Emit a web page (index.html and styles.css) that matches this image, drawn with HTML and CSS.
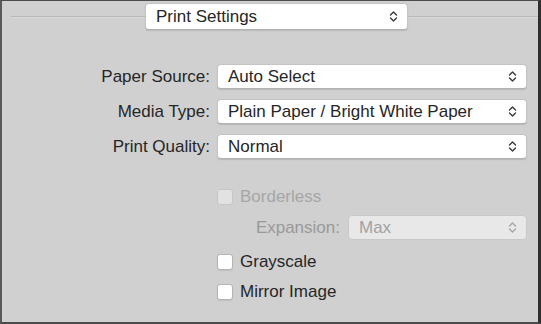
FILE: index.html
```html
<!DOCTYPE html>
<html lang="en">
<head>
  <meta charset="UTF-8" />
  <meta name="viewport" content="width=device-width, initial-scale=1.0" />
  <title>Print Settings</title>
  <link rel="stylesheet" href="styles.css">
</head>
<body>
  <div class="window">
    <div class="header">
      <div class="rule rule-left"></div>
      <div class="popup popup-header">
        <span>Print Settings</span>
        <svg class="arrows" width="9" height="13" viewBox="0 0 9 13"><path d="M1.5 5 L4.5 2 L7.5 5 M1.5 8 L4.5 11 L7.5 8" fill="none" stroke="#3a3a3a" stroke-width="1.4" stroke-linecap="round" stroke-linejoin="round"/></svg>
      </div>
      <div class="rule rule-right"></div>
    </div>

    <div class="form">
      <label class="label">Paper Source:</label>
      <div class="popup">
        <span>Auto Select</span>
        <svg class="arrows" width="9" height="13" viewBox="0 0 9 13"><path d="M1.5 5 L4.5 2 L7.5 5 M1.5 8 L4.5 11 L7.5 8" fill="none" stroke="#3a3a3a" stroke-width="1.4" stroke-linecap="round" stroke-linejoin="round"/></svg>
      </div>
      <label class="label">Media Type:</label>
      <div class="popup">
        <span>Plain Paper / Bright White Paper</span>
        <svg class="arrows" width="9" height="13" viewBox="0 0 9 13"><path d="M1.5 5 L4.5 2 L7.5 5 M1.5 8 L4.5 11 L7.5 8" fill="none" stroke="#3a3a3a" stroke-width="1.4" stroke-linecap="round" stroke-linejoin="round"/></svg>
      </div>
      <label class="label">Print Quality:</label>
      <div class="popup">
        <span>Normal</span>
        <svg class="arrows" width="9" height="13" viewBox="0 0 9 13"><path d="M1.5 5 L4.5 2 L7.5 5 M1.5 8 L4.5 11 L7.5 8" fill="none" stroke="#3a3a3a" stroke-width="1.4" stroke-linecap="round" stroke-linejoin="round"/></svg>
      </div>
    </div>

    <div class="options">
      <div class="check-row row-borderless disabled">
        <span class="box"></span>
        <span>Borderless</span>
      </div>
      <div class="expansion disabled">
        <label class="label">Expansion:</label>
        <div class="popup">
          <span>Max</span>
          <svg class="arrows" width="9" height="13" viewBox="0 0 9 13"><path d="M1.5 5 L4.5 2 L7.5 5 M1.5 8 L4.5 11 L7.5 8" fill="none" stroke="#a5a5a5" stroke-width="1.4" stroke-linecap="round" stroke-linejoin="round"/></svg>
        </div>
      </div>
      <div class="check-row row-grayscale">
        <span class="box"></span>
        <span>Grayscale</span>
      </div>
      <div class="check-row row-mirror">
        <span class="box"></span>
        <span>Mirror Image</span>
      </div>
    </div>
  </div>
</body>
</html>
```

FILE: styles.css
```css
body {
  margin: 0;
  font-family: 'Liberation Sans', Arial, sans-serif;
  font-size: 17px;
  color: #262626;
}
.window {
  width: 541px;
  height: 324px;
  box-sizing: border-box;
  background: #d0d0d0;
  border-top: 1px solid #4c4c4c;
  border-left: 2px solid #5a5a5a;
  border-right: 3px solid #2e2e2e;
  border-bottom: 2px solid #4a4a4a;
  overflow: hidden;
}
.header {
  display: flex;
  align-items: center;
  padding-top: 2px;
}
.rule {
  height: 0;
  border-top: 1px solid #b9b9b9;
  border-bottom: 1px solid #dadada;
}
.rule-left {
  margin-left: 9px;
  width: 134px;
}
.rule-right {
  flex: 1;
}
.popup {
  display: flex;
  align-items: center;
  justify-content: space-between;
  box-sizing: border-box;
  height: 25px;
  padding: 0 9px 0 10px;
  background: #fff;
  border: 1px solid #c4c4c4;
  border-bottom-color: #b3b3b3;
  border-radius: 4px;
  box-shadow: 0 1px 1px rgba(0, 0, 0, 0.12);
  white-space: nowrap;
}
.popup-header {
  width: 263px;
  height: 27px;
  padding-left: 10px;
}
.arrows {
  flex: none;
}
.form {
  display: grid;
  grid-template-columns: 208px 310px;
  column-gap: 7px;
  row-gap: 10px;
  margin-top: 34px;
}
.label {
  text-align: right;
  align-self: center;
}
.options {
  margin-left: 215px;
  margin-top: 26px;
  width: 310px;
}
.check-row {
  display: flex;
  align-items: center;
  gap: 7px;
  height: 24px;
}
.box {
  width: 16px;
  height: 16px;
  box-sizing: border-box;
  background: #fff;
  border: 1px solid #b4b4b4;
  border-radius: 3px;
  box-shadow: 0 1px 1px rgba(0, 0, 0, 0.08);
}
.expansion {
  display: grid;
  grid-template-columns: 123px 179px;
  column-gap: 8px;
  margin-top: 6px;
}
.row-grayscale {
  margin-top: 10px;
}
.row-mirror {
  margin-top: 6px;
}
.disabled {
  color: #a6a6a6;
}
.disabled .box {
  background: #e2e2e2;
  border-color: #c6c6c6;
  box-shadow: none;
}
.disabled .label {
  color: #999;
}
.disabled .popup {
  background: #e8e8e8;
  border-color: #c9c9c9;
  color: #a2a2a2;
  box-shadow: none;
}
```
